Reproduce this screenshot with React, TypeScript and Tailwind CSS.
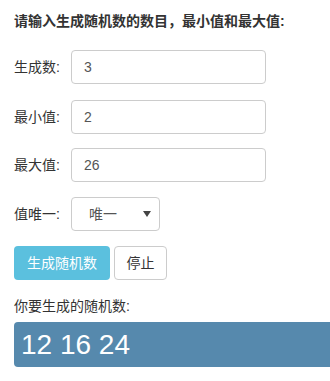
import React from "react";

const font = { fontFamily: '"Liberation Sans", "Noto Sans CJK SC", sans-serif' };

function Row({ label, children, mt }: { label: string; children: React.ReactNode; mt: string }) {
  return (
    <div className={`flex items-center ${mt}`}>
      <span className="w-[57px] text-[14px] text-[#333]">{label}</span>
      {children}
    </div>
  );
}

export default function App() {
  return (
    <div className="w-[330px] h-[381px] bg-white pl-[14px] pt-[11px] overflow-hidden text-[#333]" style={font}>
      <div className="text-[14px] font-bold leading-[20px] text-[#333]">请输入生成随机数的数目，最小值和最大值:</div>
      <Row label="生成数:" mt="mt-[19px]">
        <div className="w-[195px] h-[34px] border border-[#ccc] rounded-[4px] flex items-center pl-[12px] text-[14px] text-[#555]">3</div>
      </Row>
      <Row label="最小值:" mt="mt-[16px]">
        <div className="w-[195px] h-[34px] border border-[#ccc] rounded-[4px] flex items-center pl-[12px] text-[14px] text-[#555]">2</div>
      </Row>
      <Row label="最大值:" mt="mt-[14px]">
        <div className="w-[195px] h-[34px] border border-[#ccc] rounded-[4px] flex items-center pl-[12px] text-[14px] text-[#555]">26</div>
      </Row>
      <Row label="值唯一:" mt="mt-[15px]">
        <div className="w-[89px] h-[34px] border border-[#ccc] rounded-[4px] flex items-center pl-[17px] pr-[8px] text-[14px] text-[#555] justify-between">
          <span>唯一</span>
          <svg width="8" height="6" viewBox="0 0 8 6"><path d="M0 0h8L4 6z" fill="#444" /></svg>
        </div>
      </Row>
      <div className="flex mt-[15px] gap-[4px]">
        <div className="w-[96px] h-[34px] rounded-[4px] bg-[#5bc0de] text-white text-[14px] flex items-center justify-center">生成随机数</div>
        <div className="w-[53px] h-[34px] rounded-[4px] border border-[#ccc] text-[#333] text-[14px] flex items-center justify-center">停止</div>
      </div>
      <div className="mt-[16px] text-[14px] leading-[20px] text-[#333]">你要生成的随机数:</div>
      <div className="mt-[6px] h-[45px] rounded-l-[4px] bg-[#5689ad] text-white text-[28px] flex items-center pl-[7px]">12 16 24</div>
    </div>
  );
}
